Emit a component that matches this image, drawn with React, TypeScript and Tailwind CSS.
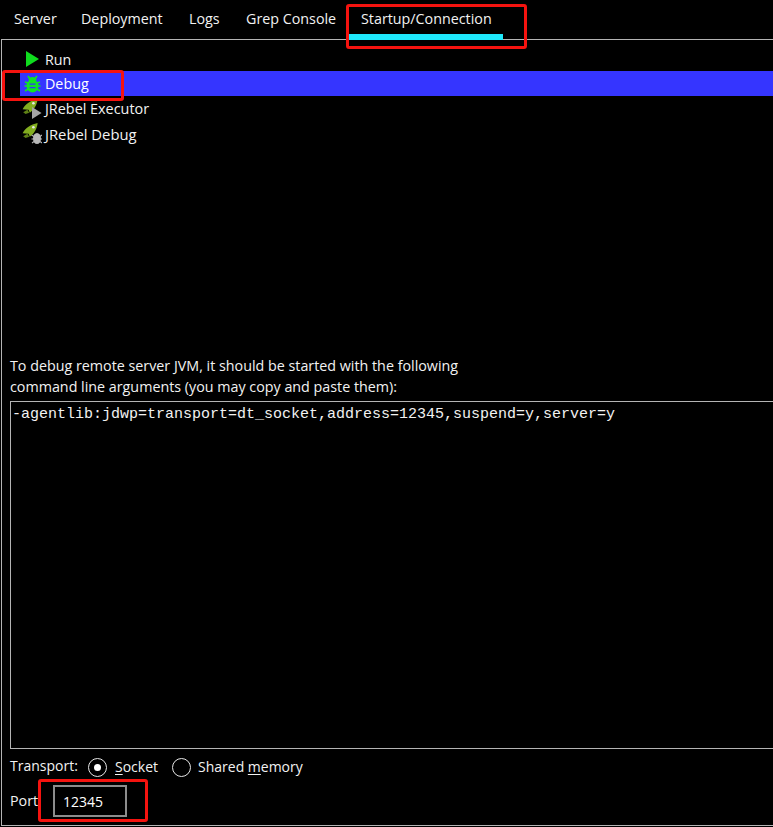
import React from "react";

const tabs = [
  { label: "Server", w: "w-[67px]" },
  { label: "Deployment", w: "w-[108px]" },
  { label: "Logs", w: "w-[57px]" },
  { label: "Grep Console", w: "w-[116px]" },
];

function RunIcon() {
  return (
    <svg width="13" height="16" viewBox="0 0 13 16">
      <path d="M0 0 L13 8 L0 16 Z" fill="#0fdc1e" />
    </svg>
  );
}

function BugIcon() {
  return (
    <svg width="17" height="18" viewBox="0 0 17 18" fill="none">
      <path d="M4 1 L6 4 M13 1 L11 4 M1 7 L4 8 M16 7 L13 8 M0.5 11 H4 M16.5 11 H13 M1 16 L4 14 M16 16 L13 14" stroke="#11e322" strokeWidth="1.7" />
      <ellipse cx="8.5" cy="5" rx="3.8" ry="3" fill="#11e322" />
      <ellipse cx="8.5" cy="11" rx="6" ry="6.4" fill="#11e322" />
      <path d="M5.5 9.2 H11.5 M5.5 12.6 H11.5" stroke="#3535ff" strokeWidth="1.2" />
    </svg>
  );
}

function Rocket() {
  return (
    <g transform="scale(1.2)">
      <path d="M0.5 8.5 C3 4 7 1.5 13 0 C12.5 5 10 9 6.5 11.5 L5.5 9 Z" fill="#82ad1f" />
      <path d="M1 11 L4.5 9 L6 11.5 L3 12.5 Z" fill="#5f8216" />
      <circle cx="9.5" cy="3.5" r="1.1" fill="#e8e8e8" />
    </g>
  );
}

function JRebelExecIcon() {
  return (
    <svg width="20" height="20" viewBox="0 0 20 20" className="-ml-[2px]">
      <Rocket />
      <path d="M10 8 L19.5 14 L10 20 Z" fill="#a5a5a5" />
    </svg>
  );
}

function JRebelDebugIcon() {
  return (
    <svg width="20" height="22" viewBox="0 0 20 22" className="-ml-[2px]">
      <Rocket />
      <ellipse cx="15" cy="15.5" rx="4" ry="5.6" fill="#b8b8b8" />
      <path d="M9.5 12 L12 13.5 M20 12 L18 13.5 M9.5 16 H12 M20 16 H18 M10 20 L12 18.5 M20 20 L18 18.5" stroke="#b8b8b8" strokeWidth="1.1" />
    </svg>
  );
}

const rows = [
  { label: "Run", icon: <RunIcon />, cls: "h-[24px]" },
  { label: "Debug", icon: <BugIcon />, cls: "h-[25px] bg-[#3535ff] text-white" },
  { label: "JRebel Executor", icon: <JRebelExecIcon />, cls: "h-[25px] text-[14.4px]" },
  { label: "JRebel Debug", icon: <JRebelDebugIcon />, cls: "h-[25px] text-[14.8px]" },
];

function Radio({ checked }: { checked: boolean }) {
  return (
    <span className="flex h-[19px] w-[19px] items-center justify-center rounded-full border border-[#e6e6e6]">
      {checked && <span className="h-[7px] w-[7px] rounded-full bg-white" />}
    </span>
  );
}

export default function App() {
  return (
    <div className="relative h-[827px] w-[773px] overflow-hidden bg-black font-['Open_Sans','Noto_Sans',sans-serif] text-[14.3px] text-[#f2f2f2]">
      <div className="flex h-[39px] pl-[1px]">
        {tabs.map((t) => (
          <div key={t.label} className={`${t.w} pl-[13px] pt-[9px] leading-[20px]`}>
            {t.label}
          </div>
        ))}
        <div className="relative w-[154px] pl-[12px] pt-[9px] leading-[20px]">
          Startup/Connection
          <div className="absolute bottom-[-1px] left-0 h-[6px] w-full bg-[#1fe9fb]" />
        </div>
      </div>

      <div className="ml-[1px] flex h-[787px] w-[790px] flex-col border border-[#b4b4b4] pt-[7px]">
        <div className="flex h-[308px] flex-col">
          {rows.map((r) => (
            <div key={r.label} className={`ml-[18px] flex items-center ${r.cls}`}>
              <span className="flex w-[25px] items-center justify-center">{r.icon}</span>
              <span className="pt-[1px] leading-[20px]">{r.label}</span>
            </div>
          ))}
        </div>

        <div className="flex flex-1 flex-col pl-[8px]">
          <div className="leading-[21px]">
            <div>To debug remote server JVM, it should be started with the following</div>
            <div>command line arguments (you may copy and paste them):</div>
          </div>
          <div className="mt-[4px] h-[348px] border border-[#b4b4b4] pl-[1px] pt-[3px] font-['Liberation_Mono',monospace] text-[15px] leading-[20px]">
            -agentlib:jdwp=transport=dt_socket,address=12345,suspend=y,server=y
          </div>
          <div className="mt-[8px] flex h-[20px] items-center text-[14px]">
            <span className="w-[78px] pb-[4px]">Transport:</span>
            <Radio checked />
            <span className="ml-[8px] w-[57px] pb-[2px]">
              <span className="underline underline-offset-2">S</span>ocket
            </span>
            <Radio checked={false} />
            <span className="ml-[7px] pb-[2px]">
              Shared <span className="underline underline-offset-2">m</span>emory
            </span>
          </div>
          <div className="mt-[8px] flex h-[32px] items-center">
            <span className="w-[43px]">Port</span>
            <div className="flex h-[32px] w-[74px] items-center border-2 border-[#8c8c8c] pl-[8px] text-[14px] text-white">12345</div>
          </div>
        </div>
      </div>

      <div className="absolute left-[346px] top-[4px] h-[45px] w-[181px] rounded-[3px] border-[3px] border-[#f5130f]" />
      <div className="absolute left-[2px] top-[70px] h-[31px] w-[122px] rounded-[3px] border-[3px] border-[#f5130f]" />
      <div className="absolute left-[38px] top-[779px] h-[43px] w-[110px] rounded-[3px] border-[3px] border-[#f5130f]" />
    </div>
  );
}
